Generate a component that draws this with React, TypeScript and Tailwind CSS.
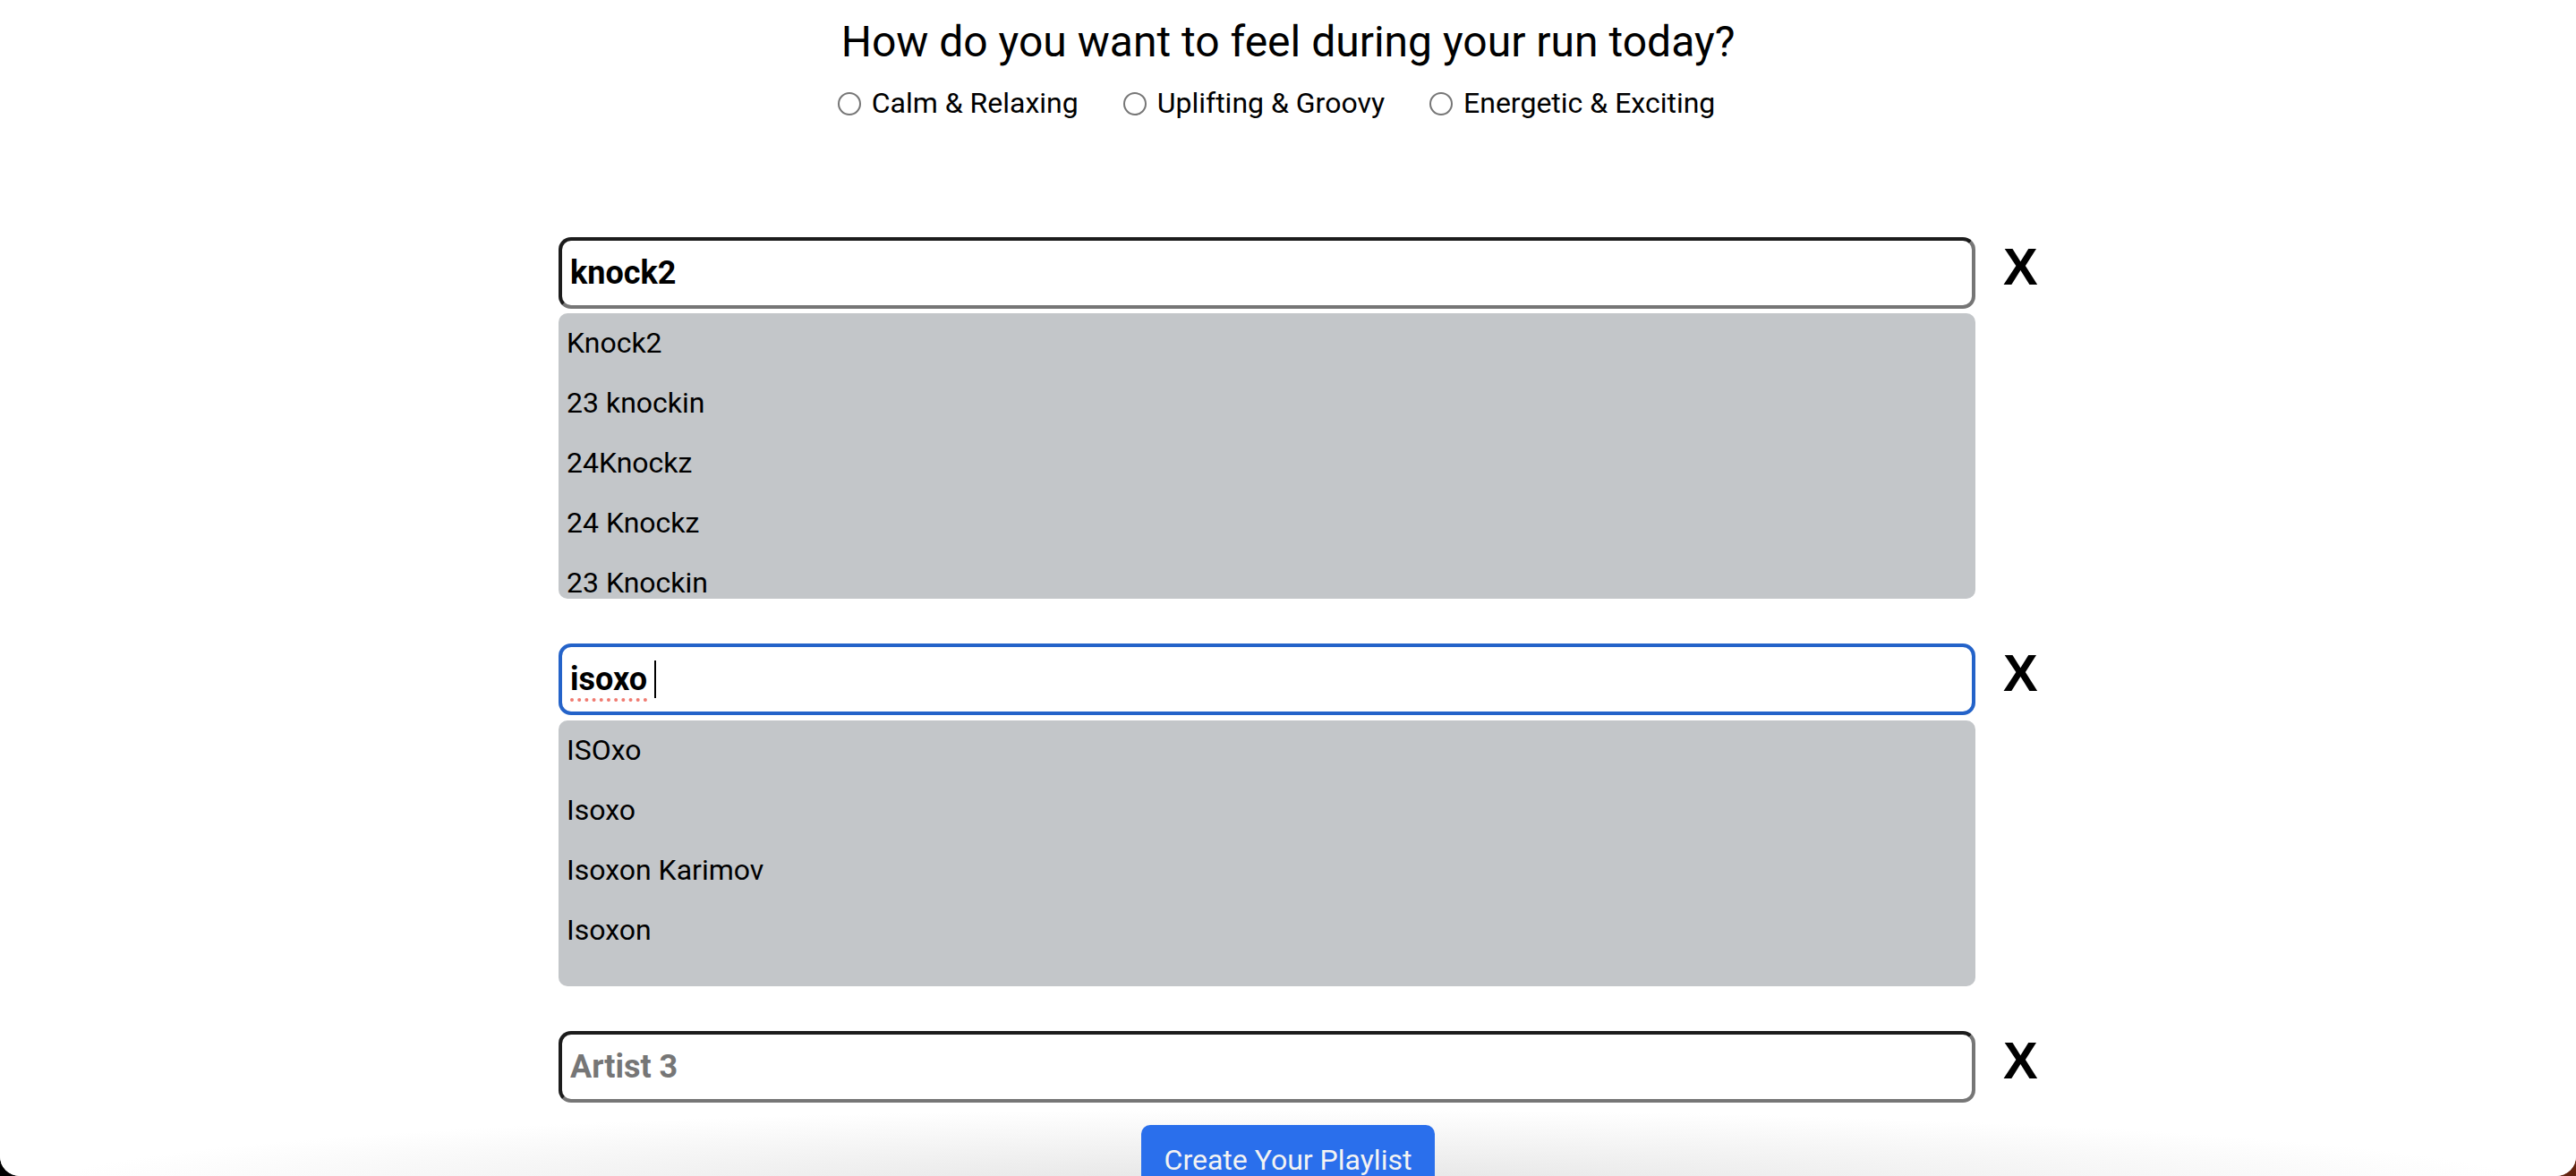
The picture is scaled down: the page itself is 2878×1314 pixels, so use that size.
import React from 'react';

const moods = ['Calm & Relaxing', 'Uplifting & Groovy', 'Energetic & Exciting'];

const RadioOption: React.FC<{ label: string }> = ({ label }) => (
    <label className="flex items-center gap-[12px] cursor-pointer">
        <span className="w-[26px] h-[26px] rounded-full border-[2px] border-[#767676] bg-white"></span>
        <span>{label}</span>
    </label>
);

const RemoveButton: React.FC = () => (
    <button className="ml-[31px] font-['Liberation_Sans',Arial,sans-serif] font-bold text-[58px] leading-[66px] text-black">
        X
    </button>
);

const Suggestions: React.FC<{ items: string[]; className?: string }> = ({ items, className }) => (
    <div className={`mt-[5px] rounded-[10px] bg-[#c3c6c9] overflow-hidden ${className ?? ''}`}>
        {items.map(name => (
            <div key={name} className="h-[67px] pl-[9px] text-[32px] leading-[66px] text-black">
                {name}
            </div>
        ))}
    </div>
);

const inputBase =
    "w-full h-[80px] rounded-[14px] bg-white px-[9px] text-[36px] font-bold text-black outline-none";

export default function App() {
    return (
        <div className="h-[1314px] bg-[linear-gradient(to_right,#000000_50%,#62230f_50%)]">
            <div className="flex h-full flex-col overflow-hidden rounded-b-[22px] bg-white font-['Roboto',sans-serif] text-black">
                <header className="flex flex-col items-center pt-[17px]">
                    <h1 className="text-[48px] leading-[59px] font-normal">How do you want to feel during your run today?</h1>
                    <div className="mt-[22px] flex items-center gap-[50px] pr-[26px] text-[32px] leading-[35px]">
                        {moods.map(m => <RadioOption key={m} label={m} />)}
                    </div>
                </header>

                <main className="mt-[132px] pl-[624px]">
                    {/* artist 1 */}
                    <div className="flex items-start">
                        <div className="w-[1583px]">
                            <input
                                readOnly
                                value="knock2"
                                className={`${inputBase} border-[4px] border-t-[#1c1c1c] border-l-[#1c1c1c] border-r-[#767676] border-b-[#767676]`}
                            />
                            <Suggestions
                                className="h-[319px]"
                                items={['Knock2', '23 knockin', '24Knockz', '24 Knockz', '23 Knockin']}
                            />
                        </div>
                        <RemoveButton />
                    </div>

                    {/* artist 2, focused */}
                    <div className="mt-[50px] flex items-start">
                        <div className="w-[1583px]">
                            <div className="flex h-[80px] items-center rounded-[14px] border-[4px] border-[#2463c9] bg-white px-[9px] text-[36px] font-bold">
                                <span className="underline decoration-dotted decoration-[#f07a70] decoration-[4px] underline-offset-[9px]">isoxo</span>
                                <span className="ml-[8px] h-[42px] w-[2px] bg-black"></span>
                            </div>
                            <Suggestions
                                className="mt-[6px] pb-[29px]"
                                items={['ISOxo', 'Isoxo', 'Isoxon Karimov', 'Isoxon']}
                            />
                        </div>
                        <RemoveButton />
                    </div>

                    {/* artist 3 */}
                    <div className="mt-[50px] flex items-start">
                        <div className="w-[1583px]">
                            <input
                                readOnly
                                placeholder="Artist 3"
                                className={`${inputBase} placeholder:text-[#767676] border-[4px] border-t-[#1c1c1c] border-l-[#1c1c1c] border-r-[#767676] border-b-[#767676]`}
                            />
                        </div>
                        <RemoveButton />
                    </div>
                </main>

                <footer className="flex flex-1 justify-center pt-[25px] bg-[radial-gradient(1400px_90px_at_50%_100%,#e3e3e3,#ffffff)]">
                    <button className="h-[72px] rounded-[10px] bg-[#2a6fec] px-[26px] pt-[6px] text-[32px] leading-[40px] self-start text-[#f3f3f3]">
                        Create Your Playlist
                    </button>
                </footer>
            </div>
        </div>
    );
}
